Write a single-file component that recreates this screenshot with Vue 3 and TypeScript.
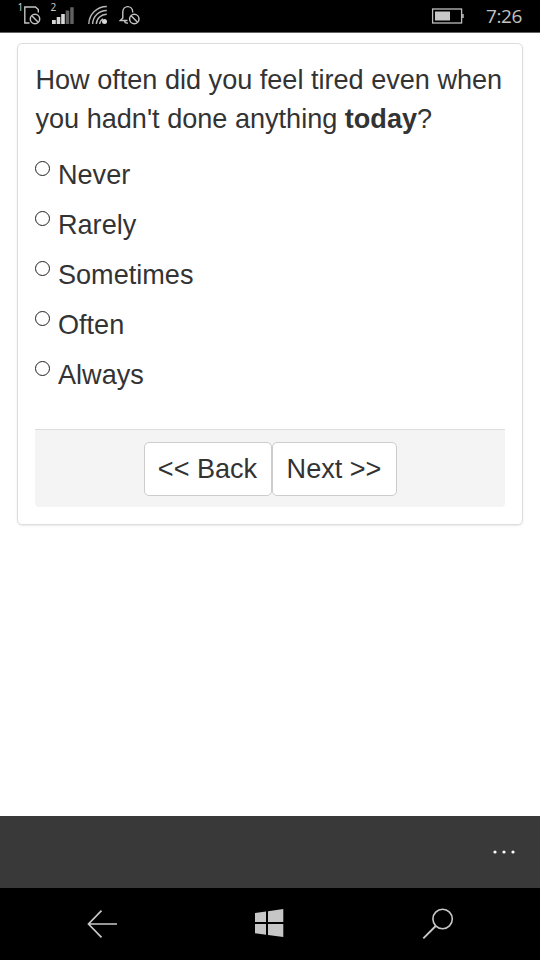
<script setup lang="ts">
import { ref } from 'vue'

const options: string[] = ['Never', 'Rarely', 'Sometimes', 'Often', 'Always']
const selected = ref<string>('')
</script>

<template>
  <div class="phone">
    <header class="status">
      <div class="indicators">
        <svg class="sim" width="26" height="28" viewBox="16 0 26 28">
          <text x="17.5" y="10.500" class="digit">1</text>
          <path d="M29.500 23H24.800V7H35.500L38.300 9.500V12.500" fill="none" stroke="#c4c4c4" stroke-width="1.400" />
          <circle cx="35" cy="19" r="4.700" fill="none" stroke="#c4c4c4" stroke-width="1.500" />
          <path d="M31.800 15.800L38.200 22.200" stroke="#c4c4c4" stroke-width="1.500" />
        </svg>
        <svg class="signal" width="26" height="28" viewBox="50 0 26 28">
          <text x="50.500" y="10.500" class="digit">2</text>
          <path d="M52 20h3.800v4H52zM56.700 17H60.300v7h-3.600zM61.200 14h3.600v10h-3.600z" fill="#d8d8d8" />
          <path d="M65.700 10.500H69.200V24h-3.500zM70.200 7.300h3.500V24h-3.500z" fill="#606060" />
        </svg>
        <svg class="wifi" width="22" height="28" viewBox="86 0 22 28">
          <g fill="none" stroke="#b8b8b8" stroke-width="1.400">
            <path d="M88.800 24A18 18 0 0 1 106.800 6.500" />
            <path d="M92.600 24A14 14 0 0 1 106.800 10.500" />
            <path d="M96.300 24A10.300 10.300 0 0 1 106.800 14.200" />
            <path d="M99.600 24A7 7 0 0 1 103 18.800" />
          </g>
          <circle cx="104.500" cy="21.500" r="2.500" fill="#d8d8d8" />
        </svg>
        <svg class="bell" width="22" height="28" viewBox="119 0 22 28">
          <path d="M127.500 20.500H120.300L122.800 18V12C122.800 4.800 132.700 4.800 132.700 12V12.500M124.500 21Q125 23.500 128 23" fill="none" stroke="#c4c4c4" stroke-width="1.400" />
          <circle cx="134.300" cy="19" r="4.700" fill="none" stroke="#c4c4c4" stroke-width="1.500" />
          <path d="M131.100 15.800L137.500 22.200" stroke="#c4c4c4" stroke-width="1.500" />
        </svg>
      </div>
      <div class="right">
        <svg width="33" height="28" viewBox="431 0 33 28">
          <rect x="432.600" y="9" width="29" height="14" fill="none" stroke="#bdbdbd" stroke-width="1.300" />
          <rect x="435" y="11.500" width="15" height="9" fill="#c8c8c8" />
          <rect x="462.200" y="14" width="1.500" height="4" fill="#bdbdbd" />
        </svg>
        <span class="clock">7:26</span>
      </div>
    </header>

    <main class="page">
      <form class="card" @submit.prevent>
        <p class="question">
          How often did you feel tired even when<br />you hadn't done anything <strong>today</strong>?
        </p>
        <div class="options">
          <label v-for="option in options" :key="option" class="option">
            <input v-model="selected" type="radio" name="tired" :value="option" />
            <span>{{ option }}</span>
          </label>
        </div>
        <div class="actions">
          <button type="button" class="back">&lt;&lt; Back</button>
          <button type="button" class="next">Next &gt;&gt;</button>
        </div>
      </form>
    </main>

    <div class="appbar">
      <svg width="24" height="6" viewBox="492 849 24 6" fill="#fff">
        <circle cx="495" cy="852" r="1.600" />
        <circle cx="504" cy="852" r="1.600" />
        <circle cx="513" cy="852" r="1.600" />
      </svg>
    </div>

    <nav class="keys">
      <svg width="180" height="72" viewBox="0 888 180 72">
        <path d="M117 924H88.500M101.500 910.700L88.500 924L101.500 937.300" fill="none" stroke="#c8c8c8" stroke-width="1.700" />
      </svg>
      <svg width="180" height="72" viewBox="180 888 180 72">
        <path d="M255 913L266 911.500V922H255zM268 911.200L283.300 909V922H268zM255 924H266V934.700L255 933.200zM268 924H283.300V937L268 934.900z" fill="#c6c6c6" />
      </svg>
      <svg width="180" height="72" viewBox="360 888 180 72">
        <circle cx="442.600" cy="919" r="9.700" fill="none" stroke="#c8c8c8" stroke-width="1.600" />
        <path d="M435.700 926L423.300 938.300" stroke="#c8c8c8" stroke-width="1.900" />
      </svg>
    </nav>
  </div>
</template>

<style>
body {
  margin: 0;
  background: #fff;
}
</style>

<style scoped>
.phone {
  width: 540px;
  height: 960px;
  display: flex;
  flex-direction: column;
  overflow: hidden;
  background: #fff;
  color: #333;
  font-family: "Liberation Sans", Arial, sans-serif;
  font-size: 27.08px;
  line-height: 39px;
}
.status {
  box-sizing: border-box;
  height: 33px;
  flex: none;
  display: flex;
  justify-content: space-between;
  padding: 0 18px 0 16px;
  background: #000;
  border-bottom: 1px solid #626262;
}
.indicators,
.right {
  display: flex;
}
.signal {
  margin-left: 8px;
}
.wifi {
  margin-left: 10px;
}
.bell {
  margin-left: 11px;
}
.digit {
  fill: #c8c8c8;
  font: 10px "Noto Sans", sans-serif;
}
.right {
  gap: 22px;
}
.clock {
  font: 19px/32px "Open Sans", "Noto Sans", sans-serif;
  letter-spacing: -0.4px;
  color: #c2c2c2;
}
.page {
  flex: 1;
  padding: 10px 17px;
}
.card {
  box-sizing: border-box;
  height: 482px;
  padding: 16px 17px 0;
  border: 1px solid #ddd;
  border-radius: 5px;
  box-shadow: 0 1px 2px rgba(0, 0, 0, 0.09);
}
.question {
  margin: 0;
  padding-left: 0.5px;
  white-space: nowrap;
}
.options {
  display: flex;
  flex-direction: column;
  gap: 11px;
  margin-top: 17px;
}
.option {
  display: flex;
  gap: 8px;
  height: 39px;
}
.option input {
  appearance: none;
  box-sizing: border-box;
  width: 15px;
  height: 15px;
  margin: 6px 0 0;
  border: 1.4px solid #222;
  border-radius: 50%;
}
.option input:checked {
  background: radial-gradient(circle, #333 45%, transparent 50%);
}
.actions {
  box-sizing: border-box;
  height: 78px;
  display: flex;
  justify-content: center;
  padding-top: 12px;
  margin-top: 35px;
  background: #f4f4f4;
  border-top: 1px solid #ddd;
  border-radius: 0 0 4px 4px;
}
.actions button {
  box-sizing: border-box;
  height: 54px;
  padding: 0 0 2px;
  border: 1px solid #ccc;
  border-radius: 5px;
  background: #fff;
  color: #333;
  font: inherit;
}
.actions .back {
  width: 128px;
}
.actions .next {
  width: 125px;
}
.appbar {
  box-sizing: border-box;
  height: 72px;
  flex: none;
  display: flex;
  justify-content: flex-end;
  align-items: center;
  padding-right: 24px;
  background: #393939;
}
.keys {
  height: 72px;
  flex: none;
  display: flex;
  background: #000;
}
</style>
